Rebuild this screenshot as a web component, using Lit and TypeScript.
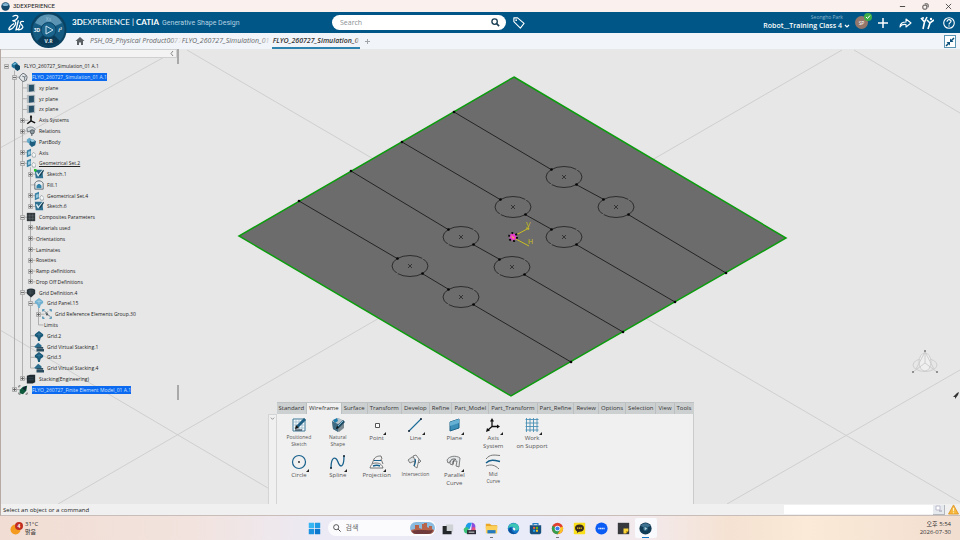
import { LitElement, html, svg, css, nothing, TemplateResult } from "lit";
import { customElement, state } from "lit/decorators.js";
import { classMap } from "lit/directives/class-map.js";

type Art = TemplateResult;

const icon = (size: number, box: number, art: unknown) =>
  html`<svg width=${size} height=${size} viewBox="0 0 ${box} ${box}" aria-hidden="true">${art}</svg>`;

/* ---------- specification tree ---------- */

interface Node {
  level: number;
  label: string;
  box?: "+" | "-";
  art?: string;
  selected?: boolean;
  underline?: boolean;
}

const NODES: Node[] = [
  { level: 0, label: "FLYO_260727_Simulation_01 A.1", box: "-", art: "product" },
  { level: 1, label: "FLYO_260727_Simulation_01 A.1", box: "-", art: "gear", selected: true },
  { level: 2, label: "xy plane", art: "plane" },
  { level: 2, label: "yz plane", art: "plane" },
  { level: 2, label: "zx plane", art: "plane" },
  { level: 2, label: "Axis Systems", box: "+", art: "axis" },
  { level: 2, label: "Relations", box: "+", art: "relations" },
  { level: 2, label: "PartBody", art: "body" },
  { level: 2, label: "Axis", box: "+", art: "geoset" },
  { level: 2, label: "Geometrical Set.2", box: "-", art: "geoset", underline: true },
  { level: 3, label: "Sketch.1", box: "+", art: "sketchNew" },
  { level: 3, label: "Fill.1", art: "fill" },
  { level: 3, label: "Geometrical Set.4", box: "+", art: "geoset" },
  { level: 3, label: "Sketch.6", box: "+", art: "sketch" },
  { level: 2, label: "Composites Parameters", box: "-", art: "composites" },
  { level: 3, label: "Materials used", box: "+" },
  { level: 3, label: "Orientations", box: "+" },
  { level: 3, label: "Laminates", box: "+" },
  { level: 3, label: "Rosettes", box: "+" },
  { level: 3, label: "Ramp definitions", box: "+" },
  { level: 3, label: "Drop Off Definitions", box: "+" },
  { level: 2, label: "Grid Definition.4", box: "-", art: "gridDef" },
  { level: 3, label: "Grid Panel.15", box: "-", art: "panel" },
  { level: 4, label: "Grid Reference Elements Group.30", box: "+", art: "group" },
  { level: 4, label: "Limits" },
  { level: 3, label: "Grid.2", art: "grid" },
  { level: 3, label: "Grid Virtual Stacking.1", art: "stack" },
  { level: 3, label: "Grid.3", art: "grid" },
  { level: 3, label: "Grid Virtual Stacking.4", art: "stack" },
  { level: 2, label: "Stacking(Engineering)", box: "+", art: "stacking" },
  { level: 1, label: "FLYO_260727_Finite Element Model_01 A.1", box: "+", art: "fem", selected: true },
];

const TREE_ART: Record<string, Art> = {
  product: svg`<path d="M2 4l4-3 3 2v5L5 9 2 7z" fill="#1f6f96"/><path d="M6 5l3-1 3 2v4l-3 2-3-2z" fill="#0e4866"/><path d="M3 4l3-2 2 1-3 2z" fill="#6fb6d6"/>`,
  gear: svg`<path d="M3 4l3-2.500 3 1.500 2 3-1 4-4 1.500L3 9l-1.500-2z" fill="#e3e6e7" stroke="#55606a"/><path d="M5 5l3 1v4M8 6l2-2" fill="none" stroke="#55606a"/>`,
  plane: svg`<path d="M1 1h10v10H1z" fill="#b3bbbf"/><path d="M3.500 2.500L9.500 2v7.500l-6 1z" fill="#264f68"/>`,
  axis: svg`<path d="M6 1v6l5 2.500M6 7L1.500 10.500" fill="none" stroke="#111" stroke-width="1.800"/><path d="M4.500 3L6 0l1.500 3z" fill="#111"/>`,
  relations: svg`<path d="M1 3c3-3 8-2 10 1l-2 3-4-1-3 1z" fill="#d4d8da" stroke="#6a757c"/><circle cx="7.500" cy="7" r="2.500" fill="#8d989e" stroke="#4b555b"/><path d="M7 9v3" stroke="#3b454b"/>`,
  body: svg`<path d="M1 3l3-2 3 2v3L4 8 1 6z" fill="#63a8c7"/><path d="M5 4l4-1 3 2-1 5-4 2-3-3z" fill="#1d5e80"/><path d="M5 4l4-1 2 2-4 1z" fill="#9fd0e5"/>`,
  geoset: svg`<path d="M1 3l5-2v8l-5 2z" fill="#3c83a5"/><path d="M2.500 4.500l3-1v4l-3 1z" fill="#9bcbe0"/><path d="M7 8l2-3 3 3-1 3H8z" fill="#f4f6f7" stroke="#8d979c" stroke-width=".8"/>`,
  sketch: svg`<path d="M1 1h9l1 10H2z" fill="#2f7190"/><path d="M3 4l2 4 6-7" fill="none" stroke="#dff0f7" stroke-width="1.600"/><path d="M6 8l5-7 1 1-4 6z" fill="#173e52"/>`,
  sketchNew: svg`<path d="M1 1h9l1 10H2z" fill="#2f7190"/><path d="M3 4l2 4 6-7" fill="none" stroke="#dff0f7" stroke-width="1.600"/><path d="M6 8l5-7 1 1-4 6z" fill="#173e52"/><path d="M0 0h3v3H0z" fill="#29c52f"/>`,
  fill: svg`<path d="M1 4c2-4 8-4 10 0v7H1z" fill="#e8ecee" stroke="#4a5a64"/><path d="M3 7c2-3 4-3 6 0v3H3z" fill="#2f81a8"/>`,
  composites: svg`<path d="M1 1h10v10H1z" fill="#33393c"/><path d="M2 4.500h8M2 8h8M4.500 2v8M8 2v8" stroke="#5c6468" stroke-width=".8"/>`,
  gridDef: svg`<path d="M1 2c3-2 7-2 10 0v5l-5 4.500L1 7z" fill="#27333a"/><path d="M3 3.500h6M3 6h6M5 2v6" stroke="#4d5a61" stroke-width=".8"/>`,
  panel: svg`<path d="M1 4l5-4 5 4v2L8 8 7 12H5L4 8 1 6z" fill="#6fb0d0"/><path d="M3 4h6M6 2v5" stroke="#b5d9ea" stroke-width=".8"/>`,
  group: svg`<path d="M1 3V1h2M9 1h2v2M1 9v2h2M11 9v2H9" fill="none" stroke="#2a7da6" stroke-width="1.300"/><path d="M3 3l2 1 2 3 3 2M7 3L4 6" fill="none" stroke="#6b767d"/><circle cx="6" cy="6.500" r="1.300" fill="#48535a"/>`,
  grid: svg`<path d="M1 4l5-4 5 4v2L8 8 7 12H5L4 8 1 6z" fill="#1a5878"/><path d="M3 4h6M6 2v5" stroke="#3f83a5" stroke-width=".8"/>`,
  stack: svg`<path d="M1 5l4-4 4 3v3H1z" fill="#2c6d8e"/><path d="M3 6h8v2H3zM3 8.500h9v3H3z" fill="#2b4d5f"/>`,
  stacking: svg`<path d="M1 2l4-1h6v9l-3 1.500H1z" fill="#202b31"/><path d="M3 4.500h6M3 7h6" stroke="#3a5160" stroke-width=".8"/>`,
  fem: svg`<path d="M2 6l4-4 5-1-1 6-4 4-4-1z" fill="#0f5a3c"/><path d="M5 4l5-3-1 6z" fill="#123"/><path d="M1 3V1h2M1 9v2h2M11 9v2H9" fill="none" stroke="#555"/>`,
};

/* ---------- command palette ---------- */

const PALETTE_TABS = ["Standard", "Wireframe", "Surface", "Transform", "Develop", "Refine", "Part_Model",
  "Part_Transform", "Part_Refine", "Review", "Options", "Selection", "View", "Tools"];

interface Command { label: string; art: Art; more?: boolean; small?: boolean; }

const COMMANDS: Command[] = [
  { label: "Positioned Sketch", small: true, art: svg`<path d="M2 2h12v12H2z" fill="#f7fafc" stroke="#3d7898"/><path d="M2 5h12M2 8h12M2 11h12M5 2v12M8 2v12M11 2v12" stroke="#8fb2c5" stroke-width=".7"/><path d="M5 11l1-3 7-7 2 2-7 7z" fill="#1f5f83"/><path d="M4 12l1-4 3 3z" fill="#111"/><path d="M4 13h7" stroke="#123"/>` },
  { label: "Natural Shape", small: true, art: svg`<path d="M2 4l6-3 6 3v7l-5 4-6-3z" fill="#7c8a92"/><path d="M2 4l6 3v8l-5-3z" fill="#3e6a82"/><path d="M2 4l6-3 6 3-6 3z" fill="#b7c4cb"/><path d="M3 3l4-2 1 3-3 2z" fill="#1d7cab"/><path d="M6 12l1-3 6-6 2 2-6 6z" fill="#1f4d66"/><path d="M8 9l5-5" stroke="#7fb9d6"/><path d="M6 12l1-3 2 2z" fill="#111"/>` },
  { label: "Point", more: true, art: svg`<path d="M6.500 6.500h4v4h-4z" fill="#fff" stroke="#555"/>` },
  { label: "Line", more: true, art: svg`<path d="M2 14L14 2" stroke="#1c6a98" stroke-width="1.100"/><circle cx="2" cy="14" r="1" fill="#123"/><circle cx="14" cy="2" r="1" fill="#123"/>` },
  { label: "Plane", more: true, art: svg`<path d="M4 5l9-3v9l-9 3z" fill="#3b8fb9" stroke="#1c6186"/><path d="M4 5l9-3v4l-9 3z" fill="#66b0d3"/>` },
  { label: "Axis System", more: true, art: svg`<path d="M7 3v6.500h6M7 9.500L3 13" fill="none" stroke="#111" stroke-width="1.300"/><path d="M5 4.500L7 1l2 3.500zM12 7.500l3 2-3 2zM5 13.500L1 15l1-4z" fill="#111"/>` },
  { label: "Work on Support", more: true, art: svg`<path d="M2.500 1v14M6 1v14M9.500 1v14M13 1v14M1.500 2.500h13M1.500 6h13M1.500 9.500h13M1.500 13h13" stroke="#4a90b4" stroke-width=".9"/>` },
  { label: "Circle", more: true, art: svg`<circle cx="8" cy="8" r="6.500" fill="none" stroke="#17608c" stroke-width="1.200"/><circle cx="8" cy="8" r=".9" fill="#222"/>` },
  { label: "Spline", more: true, art: svg`<path d="M1 14C1 2 6 2 8 8s6 6 6-6" fill="none" stroke="#17608c" stroke-width="1.300"/><circle cx="1" cy="14" r="1" fill="#123"/><circle cx="14" cy="2" r="1" fill="#123"/>` },
  { label: "Projection", more: true, art: svg`<path d="M5 5c2-3 5-3 7-3l1 3M5 5l-2 5M12 5l2 5" fill="none" stroke="#666" stroke-width=".9"/><path d="M1 14c1-4 3-5 6-5s6 1 7 5z" fill="#f4f5f6" stroke="#666" stroke-width=".9"/><path d="M4 12c3-1 5-1 7 0" fill="none" stroke="#17608c" stroke-width="1.500"/><path d="M5 6.500h7" stroke="#17608c"/>` },
  { label: "Intersection", small: true, art: svg`<path d="M1 6l4-3 5 1 4 3-2 2-3-2-4 1-2 1z" fill="#dde1e3" stroke="#666" stroke-width=".8"/><path d="M6 2l3-1 3 4-2 9-3-2 1-6z" fill="#f3f4f5" stroke="#666" stroke-width=".8"/><path d="M8 5c1 2 0 5-1 7" fill="none" stroke="#17608c" stroke-width="1.200"/>` },
  { label: "Parallel Curve", more: true, art: svg`<path d="M1 6c2-4 9-5 13-2l-1 9-3-1 1-5-4 0v4l-3-1V8L2 9z" fill="#e3e6e8" stroke="#666" stroke-width=".8"/><path d="M4 8c1-3 3-3 5-3M7 10c0-3 1-4 3-5" fill="none" stroke="#555"/>` },
  { label: "Mid Curve", small: true, art: svg`<path d="M1 5c4-5 8-4 14-3.500M1 12c5-2 9-1 13 3" fill="none" stroke="#777"/><path d="M1 9c4-4 8-3 14-1.500" fill="none" stroke="#17608c" stroke-width="1.400"/>` },
];

/* ---------- 3D scene ---------- */

const HOLES = [[564, 177], [616, 207], [513, 207], [564, 237], [461, 237], [512, 267], [410, 266], [461, 297]];
const CUTS = [[454, 112, 726, 273, 0, 1], [402, 142, 675, 302, 2, 3], [351, 171, 623, 332, 4, 5], [299, 201, 571, 362, 6, 7]];

/* ---------- taskbar ---------- */

const ICON_START = svg`<path d="M1 1h7v7H1z" fill="#35b6f2"/><path d="M9 1h7v7H9z" fill="#1f9be6"/><path d="M1 9h7v7H1z" fill="#1a92df"/><path d="M9 9h7v7H9z" fill="#0a78cf"/>`;

const APPS: { name: string; art: Art; running?: boolean; active?: boolean }[] = [
  { name: "Task view", art: svg`<path d="M6 3h9v9H6z" fill="#cfd2d4"/><path d="M2 5h5v6h6v4H2z" fill="#25282b"/>` },
  { name: "Copilot", art: svg`<path d="M3 8c0-4 2-7 5-7h3L8 9z" fill="#1d9be8"/><path d="M11 1c3 0 5 3 4 7l-5 3z" fill="#8a4fe0"/><path d="M1 9c1-3 5-3 6-1l-1 6H4c-2 0-3-2-3-5z" fill="#39c27a"/><path d="M12 6c3 0 4 2 3 5l-6 2z" fill="#e9507a"/><path d="M5 10h11v5H5z" fill="#2b2b35"/><path d="M7 12.500h7" stroke="#fff"/>` },
  { name: "File Explorer", running: true, art: svg`<path d="M1 2h5l2 2h7v4H1z" fill="#e9a628"/><path d="M1 5h14v9H1z" fill="#fcd05a"/><path d="M3 10h10v4H3z" fill="#2279bd"/>` },
  { name: "Edge", art: svg`<circle cx="8" cy="8" r="7" fill="#1277c8"/><path d="M1 8c1-8 12-9 14-1 0 3-3 4-5 3 1-3-2-5-5-4-2 0-3 1-4 2z" fill="#3cc4b4"/><path d="M6 8c-1 4 3 7 7 5-3 3-9 2-11-2 0-3 2-5 4-3z" fill="#0b4f9a"/><path d="M7 7c2-1 4 1 3 3-1 1-3 0-3-3z" fill="#eef6fb"/>` },
  { name: "Store", art: svg`<path d="M5 4V2h6v2" fill="none" stroke="#2381c4" stroke-width="1.500"/><path d="M1 4h14v9c0 1-1 2-2 2H3c-1 0-2-1-2-2z" fill="#17527f"/><path d="M5 6h2.500v2.500H5z" fill="#f0603c"/><path d="M8.500 6H11v2.500H8.500z" fill="#7fba00"/><path d="M5 9.500h2.500V12H5z" fill="#22a6f2"/><path d="M8.500 9.500H11V12H8.500z" fill="#ffc21a"/>` },
  { name: "Chrome", running: true, art: svg`<circle cx="8" cy="8" r="7" fill="#e0412f"/><path d="M8 8L2 4.500A7 7 0 0 0 8 15l3-5z" fill="#34a04e"/><path d="M8 8h0l6.500-2.500A7 7 0 0 1 8 15l3.500-5z" fill="#fbc624"/><circle cx="8" cy="8" r="3.400" fill="#fff"/><circle cx="8" cy="8" r="2.600" fill="#3b7ded"/>` },
  { name: "KakaoTalk", art: svg`<rect x="1" y="1" width="14" height="14" rx="1" fill="#f9df19"/><ellipse cx="8" cy="7.500" rx="5.500" ry="4.500" fill="#3a2a1c"/><path d="M5 10l0 3.500 3-2z" fill="#3a2a1c"/><path d="M5 7.500h6" stroke="#f9df19" stroke-width="1.500" stroke-dasharray="1.500 .7"/>` },
  { name: "Zoom", art: svg`<circle cx="8" cy="8" r="7.500" fill="#0b5cf5"/><path d="M4 8h8" stroke="#dbe7ff" stroke-width="2" stroke-dasharray="1.600 .5"/>` },
  { name: "Sticky Notes", art: svg`<path d="M1 1h14v14H1z" fill="#38393c"/><path d="M8 8h6v3l-3 3H8z" fill="#fbd63a"/><path d="M11 14v-3h3z" fill="#c79a10"/>` },
  { name: "3DEXPERIENCE", active: true, art: svg`<circle cx="8" cy="8" r="7.500" fill="#123b55"/><path d="M2 5a7 7 0 0 1 12 0l-3 1H5z" fill="#3f7290"/><circle cx="8" cy="8" r="3" fill="#2f6a88"/><path d="M7 6l3 2-3 2z" fill="#b9d1dd"/>` },
];

@customElement("app-root")
export class AppRoot extends LitElement {
  @state() private tab = "Wireframe";

  static styles = css`
    :host {
      display: grid;
      grid-template-rows: 12px 21px 16px minmax(0, 1fr) 12px 24px;
      height: 100vh;
      overflow: hidden;
      font-family: "Open Sans", "Noto Sans", "Noto Sans CJK KR", sans-serif;
      font-size: 6px;
      line-height: 8px;
      color: #333;
      background: #f0f0f0;
    }
    * { box-sizing: border-box; }
    svg { display: block; flex: none; }
    button {
      font: inherit; color: inherit; background: none; border: 0; padding: 0; margin: 0;
      display: flex; align-items: center; justify-content: center;
    }
    input { font: inherit; border: 0; padding: 0; margin: 0; outline: 0; min-width: 0; }
    a { color: inherit; text-decoration: none; }

    .title { display: flex; align-items: center; background: #faf1ee; padding: 0 2px 0 1px; gap: 3px; }
    .title h1 { font: inherit; font-family: Roboto, sans-serif; margin: 0; flex: 1; color: #222; }
    .title .win { width: 20px; }

    .bar { position: relative; display: flex; align-items: center; background: #005686; color: #fff; padding: 0 0 0 7px; }
    .ds { width: 65px; }
    .compass { position: absolute; left: 30px; top: 0; z-index: 2; }
    .brand { flex: 0 0 260px; display: flex; align-items: baseline; gap: 3px; white-space: nowrap; font-family: Lato, sans-serif; font-size: 8px; }
    .brand b { font-weight: 700; }
    .brand small { font-family: Roboto, sans-serif; font-size: 7px; color: #b5d2e3; }
    .search { flex: 0 0 174px; height: 15px; display: flex; align-items: center; background: #fff; border-radius: 8px; padding: 0 6px 0 8px; }
    .search input { flex: 1; background: none; font-size: 7px; color: #444; }
    .search input::placeholder { color: #8a8f93; opacity: 1; }
    .tag { margin-left: 6px; }
    .user { margin-left: auto; text-align: right; display: flex; flex-direction: column; line-height: 7px; }
    .user small { font-size: 5px; color: #8fb6cf; padding-right: 7px; }
    .user button { font-size: 7px; font-weight: 600; line-height: 10px; gap: 2px; }
    .avatar { position: relative; width: 13px; height: 13px; border-radius: 50%; background: #94776a; font-size: 5px; margin: 0 4px 0 5px; }
    .avatar svg { position: absolute; right: -4px; top: -3px; }
    .act { width: 22px; }

    .tabs { display: flex; align-items: stretch; background: #f1f4f8; padding: 0 4px 0 75px; font-size: 7px; font-style: italic; color: #66686b; line-height: 15px; }
    .tabs .home { display: flex; align-items: center; width: 15px; }
    .tab { position: relative; flex: 0 0 90px; white-space: nowrap; background: #f1f4f8; }
    .tab::after { content: ""; position: absolute; top: 0; bottom: 0; right: 0; width: 12px; background: linear-gradient(90deg, #f1f4f800, #f1f4f8); }
    .tab.on { flex-basis: 88px; padding-left: 1px; margin-right: 5px; color: #333; font-weight: 600; border-bottom: 2px solid #2d83ae; }
    .tab.on::after { width: 6px; }
    .tabs .fit { width: 12px; height: 13px; margin: 2px 0 0 auto; border: 1px solid #5b93b3; background: #fff; }

    .view { display: grid; grid-template: minmax(0, 1fr) / minmax(0, 1fr); background: #e7e7e7; border-left: 1px solid #b7a9a3; overflow: hidden; }
    .view > * { grid-area: 1 / 1; }
    .scene { width: 100%; height: 100%; }
    .scene text { font-family: "Liberation Sans", sans-serif; font-size: 7px; fill: #c9bf20; }

    .specs { justify-self: start; align-self: start; display: grid; grid-template-columns: 176px 2px; z-index: 1; }
    .specs .head { height: 9px; background: #f3f3f3; border: 1px solid #d0d0d0; border-left: 0; display: flex; justify-content: flex-end; padding-right: 1px; }
    .grips { grid-row: span 2; display: flex; flex-direction: column; justify-content: space-between; }
    .grips i { height: 15px; background: #a9a9a9; }
    .tree { position: relative; height: 334px; margin: 3px 0 5px; padding: 0; list-style: none; display: grid; grid-auto-rows: 1fr; font-size: 5px; line-height: 8px; color: #222; }
    .tree svg.links { position: absolute; left: 0; top: 0; }
    .tree li { display: flex; align-items: center; white-space: nowrap; min-height: 0; position: relative; }
    .l0 { padding-left: 2px; } .l1 { padding-left: 10px; } .l2 { padding-left: 18px; } .l3 { padding-left: 26px; } .l4 { padding-left: 34px; }
    .box { width: 7px; height: 7px; }
    .box svg { margin: 1px; }
    .pic { width: 10px; margin-right: 3px; }
    .l0 .pic, .l1 .pic { margin-right: 4px; }
    .nopic { width: 2px; }
    .sel { background: #0c6af0; color: #cfe2ff; }
    .under { text-decoration: underline; }

    .palette { justify-self: center; align-self: end; z-index: 1; display: grid; grid-template-columns: 9px 417px; }
    .ptabs { grid-column: 2; display: flex; background: #cdd0d1; border-top: 1px solid #bfc2c3; }
    .ptabs button { flex: 1 1 auto; height: 11px; padding-bottom: 2px; border-right: 1px solid #bcbfc0; color: #333; }
    .ptabs button.on { background: #f0f0f0; }
    .ptabs button:last-child { border-right: 0; }
    .fold { background: #f0f0f0; border: 1px solid #d2d4d5; border-width: 1px 1px 0 1px; align-items: flex-start; padding-top: 1px; }
    .cmds { background: #f0f0f0; border-right: 1px solid #c9cbcc; height: 90px; padding: 3px 0 0 3px; }
    .cells { width: 272px; display: grid; grid-template-columns: repeat(7, minmax(0, 1fr)); grid-auto-rows: 37px; }
    .cells button { flex-direction: column; justify-content: flex-start; color: #555; gap: 1px; position: relative; }
    .cells .small { font-size: 5px; line-height: 7px; }
    .cells .more { position: absolute; left: 26px; top: 15px; }

    .status { display: flex; align-items: center; background: #f0f0f0; border-bottom: 1px solid #c8bdb8; padding: 0 1px 0 2px; gap: 3px; color: #222; border-left: 1px solid #b7a9a3; }
    .status output { flex: 1; }
    .status input { flex: 0 0 149px; height: 9px; background: #fff; margin-right: -3px; }
    .status button { width: 12px; height: 10px; background: #e6e9ed; border: 1px solid #b3b7bb; border-width: 0 1px 1px 0; }

    .task { display: grid; grid-template-columns: 1fr auto 1fr; align-items: center; color: #333; line-height: 8px;
      background: linear-gradient(90deg, #f1ddd3 0, #f2e3de 20%, #eceaf4 33%, #e9ebf8 55%, #f3e9ea 68%, #f5e2d2 76%, #fbead8 84%, #f2ded0 100%); }
    .weather { display: flex; align-items: center; justify-content: flex-start; gap: 2px; text-align: left; padding-left: 10px; }
    .dock { display: flex; align-items: center; height: 24px; }
    .app { position: relative; width: 22px; height: 20px; }
    .app.active { background: #f9fafd; border-radius: 2px; }
    .app.running::after, .app.active::after { content: ""; position: absolute; bottom: 0; width: 3px; height: 1px; background: #777; }
    .app.active::after { width: 7px; background: #1373c4; }
    .find { width: 108px; height: 16px; margin: 0 1px 0 2px; background: #fbfbfe; border-radius: 8px; display: flex; align-items: center; padding: 0 1px 0 5px; gap: 5px; }
    .find input { flex: 1; background: none; font-size: 7px; color: #555; }
    .find input::placeholder { color: #666; opacity: 1; }
    .clock { text-align: right; padding-right: 9px; }
  `;

  private links() {
    const pitch = 334 / NODES.length;
    const y = (i: number) => (i + 0.5) * pitch;
    const x = (level: number) => 5.5 + level * 8;
    let d = "";
    NODES.forEach((n, i) => {
      if (n.level) d += `M${x(n.level)} ${y(i)}h${n.art ? 6 : 5}`;
      let last = -1;
      for (let k = i + 1; k < NODES.length && NODES[k].level > n.level; k++) {
        if (NODES[k].level === n.level + 1) last = k;
      }
      if (last > 0) d += `M${x(n.level + 1)} ${y(i) + 4}V${y(last)}`;
    });
    return html`<svg class="links" width="80" height="334" viewBox="0 0 80 334" aria-hidden="true">
      <path d=${d} fill="none" stroke="#a2a2a2" stroke-width=".8" /></svg>`;
  }

  private node(n: Node) {
    return html`<li class="l${n.level}">
      <span class="box">${n.box
        ? icon(5, 5, svg`<path d="M.5.5h4v4h-4z" fill="#ddd" stroke="#999" stroke-width=".7"/><path d=${n.box === "+" ? "M1 2.5h3M2.5 1v3" : "M1 2.5h3"} stroke="#555" stroke-width=".8"/>`)
        : nothing}</span>
      ${n.art ? html`<span class="pic">${icon(10, 12, TREE_ART[n.art])}</span>` : html`<span class="nopic"></span>`}
      <span class=${classMap({ sel: !!n.selected, under: !!n.underline })}>${n.label}</span>
    </li>`;
  }

  private scene() {
    const dot = (x: number, y: number) => svg`<circle cx=${x} cy=${y} r="1.300" fill="#050505"/>`;
    return html`<svg class="scene" viewBox="1 49 959 455" preserveAspectRatio="xMidYMid slice" role="img" aria-label="Part geometry">
      <path d="M0 148L177 50M187 50L960 502M842 50L58 504M854 50L960 113M0 330L295 504M960 370L727 504" stroke="#cfcfcf" fill="none"/>
      <path d="M514 77L786 238 511 396 239 236z" fill="#6c6c6c" stroke="#0c9c0e" stroke-width="1.500"/>
      ${CUTS.map(([x1, y1, x2, y2, a, b]) => {
        const [p, q] = [HOLES[a], HOLES[b]];
        return svg`<path d="M${x1} ${y1}L${p[0] - 12} ${p[1] - 7}M${p[0] + 13} ${p[1] + 8}L${q[0] - 13} ${q[1] - 8}M${q[0] + 13} ${q[1] + 8}L${x2} ${y2}" stroke="#1c1c1c" stroke-width=".9"/>${dot(x1, y1)}${dot(x2, y2)}`;
      })}
      ${HOLES.map(([x, y]) => svg`
        <ellipse cx=${x} cy=${y} rx="18" ry="10.500" fill="none" stroke="#262626" stroke-width=".9"/>
        <path d="M${x - 2} ${y - 2}l4 4m0-4l-4 4" stroke="#262626" stroke-width=".8"/>
        ${dot(x - 12.5, y - 7.5)}${dot(x + 12.5, y + 7.5)}
        <circle cx=${x + 13} cy=${y - 7.5} r=".6" fill="#8d8d8d"/><circle cx=${x - 13} cy=${y + 7.5} r=".6" fill="#8d8d8d"/>`)}
      <path d="M514 236L529 228m-3 0h3l-1 2M514 238l15 8" fill="none" stroke="#c9bf20"/>
      <text x="526" y="227">V</text><text x="528" y="244">H</text>
      <circle cx="513" cy="237" r="3.500" fill="#e83bd0"/><path d="M511 235l4 3-2 1z" fill="#f0a050"/>
      <circle cx="513" cy="237" r="4" fill="none" stroke="#0a0a0a" stroke-width="2" stroke-dasharray="1.800 2.400"/>
      <g fill="none" stroke="#cbcbcb" stroke-width=".9">
        <ellipse cx="925" cy="365" rx="12" ry="6.500"/><ellipse cx="925" cy="362" rx="6" ry="9" fill="#efefef"/>
        <path d="M925 351v12l-12 9M925 363l12 9M925 352l-9 17M925 352l9 17"/></g>
      <path d="M925 350v2M912 372h2M936 372h2" stroke="#777" stroke-width="1.500"/>
      <path d="M959 392l-1 3-3 4v-2l-2 0 4-4z" fill="#333"/>
    </svg>`;
  }

  render() {
    return html`
      <header class="title">
        ${icon(9, 16, svg`<circle cx="8" cy="8" r="7.500" fill="#14496b"/><path d="M2 5a7 7 0 0 1 12 0l-3 2H5z" fill="#7fb2cf"/>`)}
        <h1>3DEXPERIENCE</h1>
        <button class="win" aria-label="Minimize">${icon(7, 8, svg`<path d="M1 4h6" stroke="#333"/>`)}</button>
        <button class="win" aria-label="Restore">${icon(7, 8, svg`<rect x="1" y="2.500" width="4.500" height="4.500" rx="1" fill="none" stroke="#333"/><path d="M3 1h3q1 0 1 1v3" fill="none" stroke="#333"/>`)}</button>
        <button class="win" aria-label="Close">${icon(7, 8, svg`<path d="M1 1l6 6m0-6l-6 6" stroke="#333" stroke-width=".9"/>`)}</button>
      </header>

      <div class="bar">
        <div class="ds">${icon(18, 24, svg`<g fill="none" stroke="#fff" stroke-width="1.700" stroke-linecap="round"><path d="M8 3c4-2 8-1 6 2-1 2-4 4-6 4"/><path d="M8 9c4 1 5 3 2 7-2 3-5 5-7 5-2-1 2-6 6-8"/><path d="M15 9l-3 12c3 0 5-3 5-6"/><path d="M22 10c-3-1-5 1-4 3 2 2 4 4 3 5-1 2-3 3-6 3"/></g>`)}</div>
        <button class="compass" aria-label="Compass">${icon(37, 37, svg`
          <circle cx="18.500" cy="18" r="18" fill="#0b4261"/><circle cx="18.500" cy="18" r="16" fill="#155a80"/>
          <path d="M5 11A15 15 0 0 1 32 11L25 14a8 8 0 0 0-13 0z" fill="#5b93b3"/>
          <path d="M7 29A16 16 0 0 0 30 29l-6-6a8 8 0 0 1-11 0z" fill="#0a3b58"/>
          <circle cx="18.500" cy="18" r="7.500" fill="#1b658d" stroke="#0d4465"/>
          <path d="M16 14l7 4-7 4z" fill="none" stroke="#cfe2ee"/>
          <g fill="#e8f2f8" font-size="5" font-weight="700" text-anchor="middle"><text x="7" y="20">3D</text><text x="18.500" y="31">V.R</text><text x="30" y="20" font-style="italic">i²</text></g>
          <g fill="#9cc3d9" font-size="5" text-anchor="middle"><text x="18.500" y="9">Xs</text></g>`)}</button>
        <div class="brand"><span><b>3D</b>EXPERIENCE | <b>CATIA</b></span><small>Generative Shape Design</small></div>
        <label class="search"><input aria-label="Search" placeholder="Search" />
          ${icon(9, 10, svg`<circle cx="4" cy="4" r="3" fill="none" stroke="#1b3f55" stroke-width="1.500"/><path d="M6 6l3 3" stroke="#1b3f55" stroke-width="1.800"/>`)}</label>
        <button class="tag" aria-label="Tags">${icon(13, 14, svg`<path d="M2 2l4 0 7 6-4 5-7-7z" fill="none" stroke="#fff" stroke-width="1.200" stroke-linejoin="round"/><circle cx="4.500" cy="4.500" r=".9" fill="#fff"/>`)}</button>
        <div class="user"><small>Seongho Park</small>
          <button>Robot__Training Class 4 ${icon(6, 6, svg`<path d="M1 2l2 2 2-2" fill="none" stroke="#fff" stroke-width="1.200"/>`)}</button></div>
        <button class="avatar" aria-label="Profile">SP${icon(8, 8, svg`<circle cx="4" cy="4" r="4" fill="#3fae49"/><path d="M2 4l1.500 1.500L6 2.500" fill="none" stroke="#fff"/>`)}</button>
        <button class="act" aria-label="Add">${icon(12, 12, svg`<path d="M6 1v10M1 6h10" stroke="#fff" stroke-width="1.500"/>`)}</button>
        <button class="act" aria-label="Share">${icon(13, 13, svg`<path d="M1 11c0-4 3-5 6-5V3l5 4-5 4V8.500C4 8 2 9 1 11z" fill="none" stroke="#fff" stroke-width="1.100" stroke-linejoin="round"/>`)}</button>
        <button class="act" aria-label="Communities">${icon(14, 14, svg`<path d="M1 2l3.500 4L7 1M4.500 6L3 13M7 4l3 3L14 4M10 7L8 13" fill="none" stroke="#fff" stroke-width="1.600"/><circle cx="3" cy="2" r="1" fill="#fff"/><circle cx="11" cy="3" r="1.200" fill="#fff"/>`)}</button>
        <button class="act" aria-label="Help">${icon(12, 12, svg`<circle cx="6" cy="6" r="5.300" fill="none" stroke="#fff" stroke-width="1.100"/><path d="M4 4.700c0-3 4.500-2.300 4-.2C7.800 5.700 6 5.700 6 7.500" fill="none" stroke="#fff" stroke-width="1.200"/><circle cx="6" cy="9" r=".7" fill="#fff"/>`)}</button>
      </div>

      <nav class="tabs">
        <a class="home" href="#home" aria-label="Home">${icon(10, 10, svg`<path d="M5 1L.5 5H2v4h2V6.500h2V9h2V5h1.500z" fill="#5c6166"/>`)}</a>
        <a class="tab" href="#p1">PSH_09_Physical Product0077</a>
        <a class="tab" href="#p2">FLYO_260727_Simulation_01</a>
        <a class="tab on" href="#p3" aria-current="page">FLYO_260727_Simulation_0</a>
        <button aria-label="New tab">${icon(5, 5, svg`<path d="M2.500 0v5M0 2.500h5" stroke="#a0a6aa"/>`)}</button>
        <button class="fit" aria-label="Exit full view">${icon(10, 10, svg`<path d="M9 1L6 4M1 9l3-3" stroke="#0b4f78" stroke-width="1.500"/><path d="M5 1.500V5h3.500zM5 8.500V5H1.500z" fill="#0b4f78"/>`)}</button>
      </nav>

      <main class="view">
        ${this.scene()}
        <aside class="specs">
          <div class="head">${icon(6, 6, svg`<path d="M4 1L2 3.500 4 6" fill="none" stroke="#777" stroke-width=".9"/>`)}</div>
          <div class="grips"><i></i><i></i></div>
          <ul class="tree">${this.links()}${NODES.map((n) => this.node(n))}</ul>
        </aside>
        <section class="palette">
          <div class="ptabs" role="tablist">${PALETTE_TABS.map((t) => html`<button role="tab" aria-selected=${t === this.tab}
            class=${classMap({ on: t === this.tab })} @click=${() => (this.tab = t)}>${t}</button>`)}</div>
          <button class="fold" aria-label="Collapse">${icon(5, 6, svg`<path d="M1 2l2 2 2-2" fill="none" stroke="#777" stroke-width=".9"/>`)}</button>
          <div class="cmds"><div class="cells">${COMMANDS.map((c) => html`<button class=${classMap({ small: !!c.small })}>
            ${icon(16, 16, c.art)}<span>${c.label.includes(" ")
              ? html`${c.label.slice(0, c.label.indexOf(" "))}<br />${c.label.slice(c.label.indexOf(" ") + 1)}`
              : c.label}</span>
            ${c.more ? html`<svg class="more" width="3" height="3" viewBox="0 0 3 3"><path d="M3 0v3H0z" fill="#222"/></svg>` : nothing}
          </button>`)}</div></div>
        </section>
      </main>

      <footer class="status">
        <output>Select an object or a command</output>
        <input aria-label="Command" />
        <button aria-label="Run command">${icon(8, 8, svg`<path d="M1 1h4v4H1z" fill="#fff" stroke="#bbc"/><path d="M4 6h3" stroke="#99a"/>`)}</button>
        ${icon(11, 12, svg`<path d="M6 1l5.500 10H.5z" fill="#f6b73c" stroke="#d98d1c" stroke-width=".8" stroke-linejoin="round"/><path d="M6 4v4M6 9v1" stroke="#fff3d0" stroke-width="1.300"/>`)}
      </footer>

      <footer class="task">
        <button class="weather">${icon(13, 13, svg`<circle cx="5.500" cy="7.500" r="5" fill="#f49a1f"/><circle cx="9" cy="4" r="4" fill="#c22d22"/><text x="9" y="6" font-size="5" font-weight="700" fill="#fff" text-anchor="middle">4</text>`)}
          <span>31°C<br />맑음</span></button>
        <div class="dock">
          <button class="app" aria-label="Start">${icon(13, 17, ICON_START)}</button>
          <label class="find">${icon(8, 10, svg`<circle cx="4" cy="4" r="3.200" fill="none" stroke="#333"/><path d="M6.500 6.500L9.500 9.500" stroke="#333" stroke-width="1.200"/>`)}
            <input aria-label="검색" placeholder="검색" />
            <svg width="25" height="12" viewBox="0 0 25 12" aria-hidden="true"><rect width="25" height="12" rx="6" fill="#8cbbe0"/><path d="M1 8l4-1V3h4v3l3 1V2h2V1h3v4l2 1V4h3v3l2 1c0 2-2 4-5 4H6C3 12 1 10 1 8z" fill="#b8644a"/><path d="M2 9c6-2 14 0 21-1-1 3-3 4-6 4H7c-3 0-4-1-5-3z" fill="#6e3a3c"/></svg>
          </label>
          ${APPS.map((a) => html`<button class=${classMap({ app: true, running: !!a.running, active: !!a.active })} aria-label=${a.name}>${icon(13, 16, a.art)}</button>`)}
        </div>
        <div class="clock">오후 5:54<br />2026-07-30</div>
      </footer>
    `;
  }
}
